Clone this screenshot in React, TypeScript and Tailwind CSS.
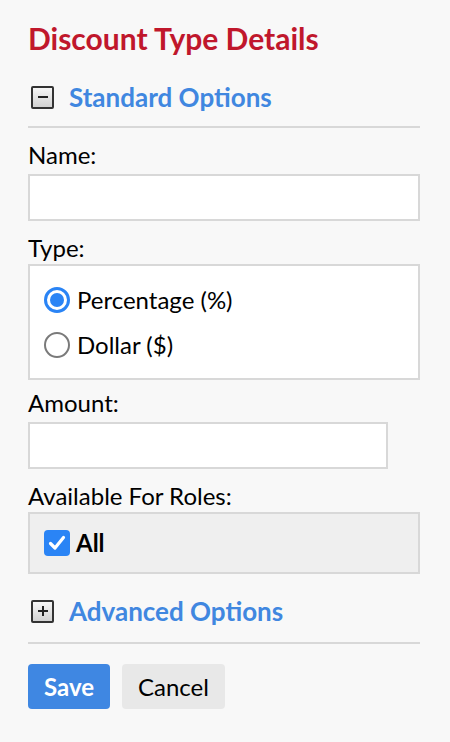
import React, { useState } from "react";

const ToggleIcon = ({ open }: { open: boolean }) => (
  <span className="relative flex h-[23px] w-[23px] items-center justify-center rounded-[2px] border-2 border-[#333] bg-gradient-to-b from-[#f6f6f6] to-[#d2d2d2]">
    <span className="absolute h-[2px] w-[10px] bg-[#222]" />
    {!open && <span className="absolute h-[10px] w-[2px] bg-[#222]" />}
  </span>
);

const Section = ({ title, open }: { title: string; open: boolean }) => (
  <div className="flex h-[40px] items-center gap-[15px] pl-[3px]">
    <ToggleIcon open={open} />
    <span className="text-[26px] font-bold text-[#4087e0]">{title}</span>
  </div>
);

const Radio = ({ checked }: { checked: boolean }) =>
  checked ? (
    <span className="flex h-[26px] w-[26px] items-center justify-center rounded-full border-[3px] border-[#2a84f5] bg-white">
      <span className="h-[14px] w-[14px] rounded-full bg-[#2a84f5]" />
    </span>
  ) : (
    <span className="h-[26px] w-[26px] rounded-full border-2 border-[#7a7a7a] bg-white" />
  );

const App = () => {
  const [type, setType] = useState("pct");
  const [all, setAll] = useState(true);

  return (
    <div
      className="min-h-[742px] w-[450px] bg-[#f8f8f8] pl-[28px] pr-[30px] pt-[18px] text-black"
      style={{ fontFamily: "Lato, 'Open Sans', sans-serif" }}
    >
      <h2 className="text-[30px] leading-[40px] font-bold text-[#c0172c]">Discount Type Details</h2>

      <div className="mt-[19px]">
        <Section title="Standard Options" open />
      </div>
      <div className="mt-[9px] h-[2px] bg-[#d8d8d8]" />

      <label className="mt-[14px] block text-[24px] leading-[26px]">Name:</label>
      <input className="mt-[6px] block h-[47px] w-full border-2 border-[#d8d8d8] bg-white outline-none" />

      <label className="mt-[14px] block text-[24px] leading-[26px]">Type:</label>
      <div className="mt-[3px] flex h-[116px] flex-col justify-center gap-[19px] border-2 border-[#d8d8d8] bg-white pl-[14px]">
        <button className="flex h-[26px] items-center gap-[7px] text-[24px] leading-none" onClick={() => setType("pct")}>
          <Radio checked={type === "pct"} />
          <span>Percentage (%)</span>
        </button>
        <button className="flex h-[26px] items-center gap-[7px] text-[24px] leading-none" onClick={() => setType("usd")}>
          <Radio checked={type === "usd"} />
          <span>Dollar ($)</span>
        </button>
      </div>

      <label className="mt-[10px] block text-[24px] leading-[26px]">Amount:</label>
      <input className="mt-[6px] block h-[47px] w-[360px] border-2 border-[#d8d8d8] bg-white outline-none" />

      <label className="mt-[14px] block text-[24px] leading-[26px]">Available For Roles:</label>
      <div className="mt-[3px] flex h-[62px] items-center border-2 border-[#d8d8d8] bg-[#efefef] pl-[14px]">
        <button className="flex items-center gap-[6px]" onClick={() => setAll(!all)}>
          <span className={`flex h-[26px] w-[26px] items-center justify-center rounded-[4px] ${all ? "bg-[#2a84f5]" : "border-2 border-[#7a7a7a] bg-white"}`}>
            {all && (
              <svg width="20" height="20" viewBox="0 0 20 20">
                <path d="M3.5 10.5 L8 15 L16.5 4.5" fill="none" stroke="white" strokeWidth="3.2" strokeLinecap="round" strokeLinejoin="round" />
              </svg>
            )}
          </span>
          <span className="text-[24px] leading-none font-bold">All</span>
        </button>
      </div>

      <div className="mt-[17px]">
        <Section title="Advanced Options" open={false} />
      </div>
      <div className="mt-[11px] h-[2px] bg-[#d8d8d8]" />

      <div className="mt-[20px] flex gap-[12px]">
        <button className="h-[45px] rounded-[4px] bg-[#3f87e2] px-[16px] text-[24px] font-bold text-white">Save</button>
        <button className="h-[45px] rounded-[4px] bg-[#e8e8e8] px-[16px] text-[24px] text-black">Cancel</button>
      </div>
    </div>
  );
};

export default App;
